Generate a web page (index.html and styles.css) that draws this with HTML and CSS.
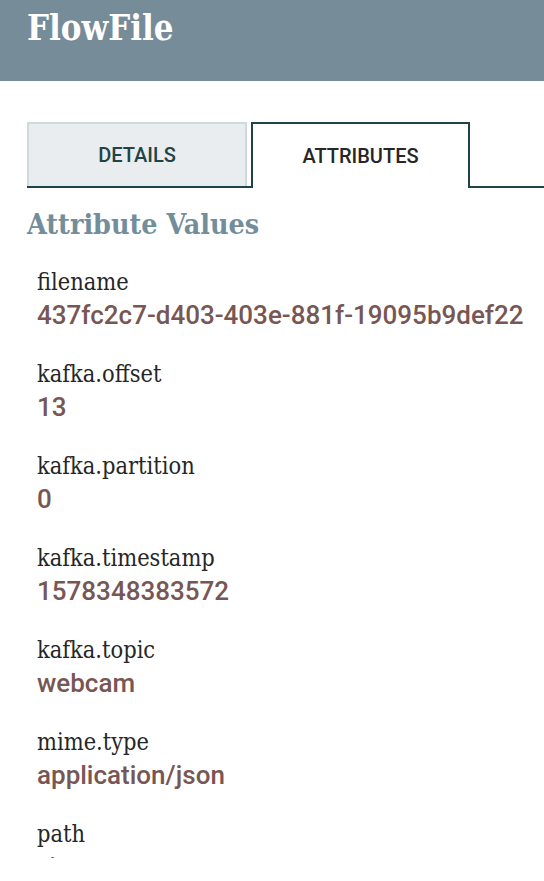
FILE: index.html
```html
<!DOCTYPE html>
<html>
<head>
<meta charset="utf-8">
<link rel="stylesheet" href="styles.css">
</head>
<body>
<header class="bar"><h1 class="title">FlowFile</h1></header>
<main class="content">
  <nav class="tabs">
    <div class="tab tab-inactive">DETAILS</div>
    <div class="tab tab-active">ATTRIBUTES</div>
  </nav>
  <h2 class="section">Attribute Values</h2>
  <div class="attrs">
    <div class="attr"><div class="name">filename</div><div class="value">437fc2c7-d403-403e-881f-19095b9def22</div></div>
    <div class="attr"><div class="name">kafka.offset</div><div class="value">13</div></div>
    <div class="attr"><div class="name">kafka.partition</div><div class="value">0</div></div>
    <div class="attr"><div class="name">kafka.timestamp</div><div class="value">1578348383572</div></div>
    <div class="attr"><div class="name">kafka.topic</div><div class="value">webcam</div></div>
    <div class="attr"><div class="name">mime.type</div><div class="value">application/json</div></div>
    <div class="attr"><div class="name">path</div><div class="value">./</div></div>
  </div>
</main>
</body>
</html>
```
FILE: styles.css
```css
html, body { margin: 0; padding: 0; background: #fff; overflow: hidden; height: 881px; }
.bar { background: #778c99; height: 81px; padding: 0 27px; box-sizing: border-box; }
.title { margin: 0; font-family: "DejaVu Serif Condensed", "DejaVu Serif", serif; font-weight: bold; font-size: 34.5px; line-height: 56px; color: #fff; }
.content { padding: 41px 0 0 27px; }
.tabs { display: flex; border-bottom: 2px solid #1e4447; height: 64px; }
.tab { box-sizing: border-box; width: 220px; height: 64px; display: flex; align-items: center; justify-content: center; font-family: Roboto, sans-serif; font-weight: 500; font-size: 20px; border: 2px solid; border-bottom: none; }
.tab-inactive { background: #e9edef; border-color: #cfdbdb; color: #1e4447; margin-right: 4px; }
.tab-active { background: #fff; border-color: #1e4447; color: #262626; height: 66px; width: 219px; }
.section { margin: 18px 0 0 0; font-family: "DejaVu Serif Condensed", "DejaVu Serif", serif; font-weight: bold; font-size: 28.4px; line-height: 36px; color: #728e9b; }
.attrs { padding: 24px 0 0 10px; height: 592px; overflow: hidden; }
.attr { margin-bottom: 26px; }
.name { font-family: "DejaVu Serif Condensed", "DejaVu Serif", serif; font-size: 23.4px; line-height: 33px; color: #262626; }
.value { font-family: Roboto, sans-serif; font-weight: 500; font-size: 26px; line-height: 33px; color: #785654; }
```
